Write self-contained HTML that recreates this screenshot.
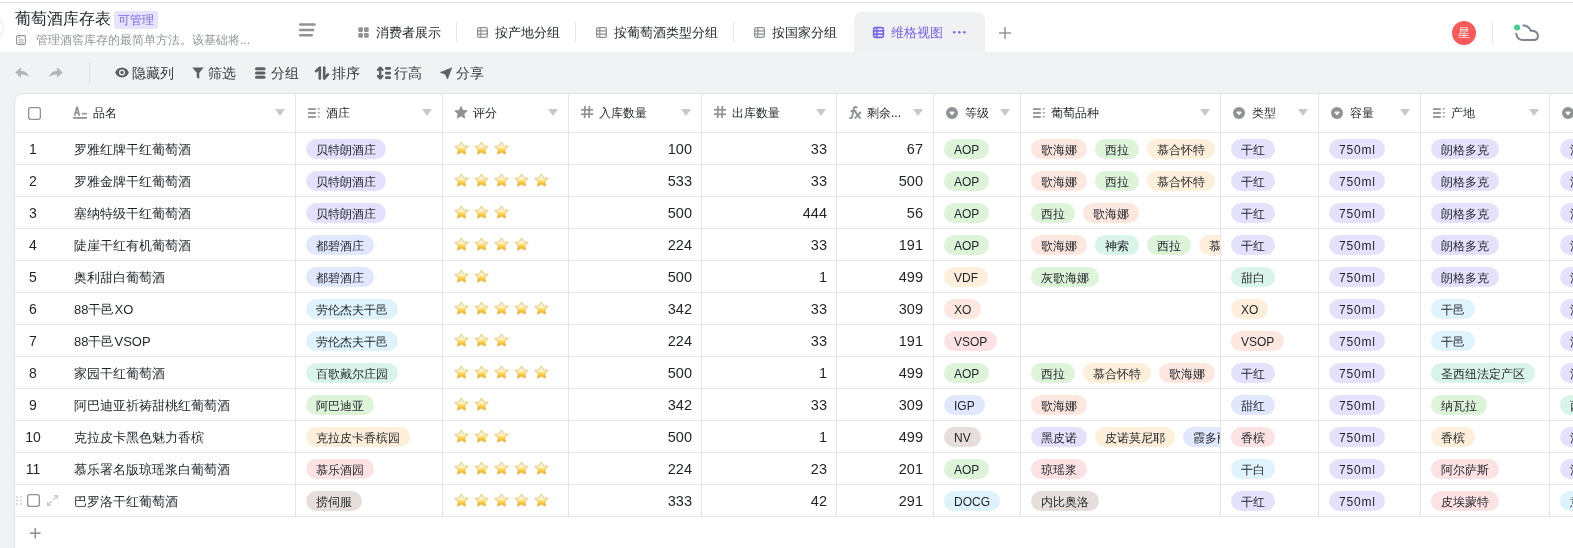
<!DOCTYPE html><html><head><meta charset="utf-8"><style>
*{box-sizing:border-box}
html,body{margin:0;padding:0}
body{width:1573px;height:548px;overflow:hidden;position:relative;background:#fff;font-family:"Liberation Sans",sans-serif;color:#1f2329}
.a{position:absolute}
svg{position:absolute;overflow:visible}
.nw{white-space:nowrap}
.pill{position:absolute;height:20px;border-radius:10px;font-size:12px;line-height:22px;padding:0 10px;white-space:nowrap;color:#1f2329}
.hd{position:absolute;top:105px;font-size:12px;line-height:17px;white-space:nowrap;color:#1f2329}
.tri{position:absolute;top:109px;width:0;height:0;border-left:5px solid transparent;border-right:5px solid transparent;border-top:7px solid #c5c8cc}
.cell{position:absolute;font-size:13px;line-height:16px;white-space:nowrap;color:#1f2329}
.tab{position:absolute;top:24px;font-size:13px;line-height:17px;white-space:nowrap;color:#1f2329}
.tb{position:absolute;top:64px;font-size:14px;line-height:18px;white-space:nowrap;color:#34383e}
</style></head><body><div id="root" style="position:absolute;left:0;top:0;width:1573px;height:548px;overflow:hidden;will-change:transform">
<div class="a" style="left:0;top:2px;width:1573px;height:1px;background:#e1e2e6"></div>
<div class="a" style="left:-20px;top:16px;width:24px;height:24px;border-radius:50%;border:1px solid #e6e7ea"></div>
<div class="a nw" style="left:15px;top:9px;font-size:16px;line-height:20px;color:#1f2329">葡萄酒库存表</div>
<div class="a nw" style="left:114px;top:11px;width:44px;height:18px;border-radius:3px;background:#e6e3fc;color:#7b6af0;font-size:12px;line-height:19px;text-align:center">可管理</div>
<svg style="left:16px;top:35px" width="10" height="10" viewBox="0 0 10 10"><rect x="0.6" y="0.6" width="8.8" height="8.8" rx="1.5" fill="none" stroke="#909296" stroke-width="1.1"/><rect x="2.2" y="2.4" width="2.6" height="0.7" fill="#909296"/><rect x="2.2" y="4" width="5.6" height="1.8" fill="#c9ccd1"/><rect x="2.2" y="6.7" width="5.6" height="0.8" fill="#909296"/></svg>
<div class="a nw" style="left:36px;top:32px;font-size:12px;line-height:16px;color:#8f959e">管理酒窖库存的最简单方法。该基础将...</div>
<svg style="left:299px;top:23px" width="17" height="15" viewBox="0 0 17 15"><g stroke="#909296" stroke-width="2.4" stroke-linecap="round"><line x1="1.2" y1="1.5" x2="15.6" y2="1.5"/><line x1="1.2" y1="7" x2="14.2" y2="7"/><line x1="1.2" y1="12.2" x2="12.8" y2="12.2"/></g></svg>
<svg style="left:358px;top:27px" width="11" height="11" viewBox="0 0 11 11"><g fill="#909296"><rect x="0.3" y="0.3" width="4.6" height="4.6" rx="0.8"/><rect x="6.1" y="0.3" width="4.6" height="4.6" rx="0.8"/><rect x="0.3" y="6.1" width="4.6" height="4.6" rx="0.8"/><rect x="6.1" y="6.1" width="4.6" height="4.6" rx="0.8"/></g></svg>
<div class="tab" style="left:376px">消费者展示</div>
<div class="a" style="left:456px;top:22px;width:1px;height:20px;background:#e4e5e7"></div>
<svg style="left:477px;top:27px" width="11" height="11" viewBox="0 0 11 11"><g fill="none" stroke="#909296" stroke-width="1.3"><rect x="0.65" y="0.65" width="9.7" height="9.7" rx="1.6"/><line x1="0.65" y1="3.9" x2="10.35" y2="3.9"/><line x1="0.65" y1="7.1" x2="10.35" y2="7.1"/><line x1="3.8" y1="0.65" x2="3.8" y2="10.35"/></g></svg>
<div class="tab" style="left:495px">按产地分组</div>
<div class="a" style="left:575px;top:22px;width:1px;height:20px;background:#e4e5e7"></div>
<svg style="left:596px;top:27px" width="11" height="11" viewBox="0 0 11 11"><g fill="none" stroke="#909296" stroke-width="1.3"><rect x="0.65" y="0.65" width="9.7" height="9.7" rx="1.6"/><line x1="0.65" y1="3.9" x2="10.35" y2="3.9"/><line x1="0.65" y1="7.1" x2="10.35" y2="7.1"/><line x1="3.8" y1="0.65" x2="3.8" y2="10.35"/></g></svg>
<div class="tab" style="left:614px">按葡萄酒类型分组</div>
<div class="a" style="left:733px;top:22px;width:1px;height:20px;background:#e4e5e7"></div>
<svg style="left:754px;top:27px" width="11" height="11" viewBox="0 0 11 11"><g fill="none" stroke="#909296" stroke-width="1.3"><rect x="0.65" y="0.65" width="9.7" height="9.7" rx="1.6"/><line x1="0.65" y1="3.9" x2="10.35" y2="3.9"/><line x1="0.65" y1="7.1" x2="10.35" y2="7.1"/><line x1="3.8" y1="0.65" x2="3.8" y2="10.35"/></g></svg>
<div class="tab" style="left:772px">按国家分组</div>
<div class="a" style="left:854px;top:12px;width:131px;height:41px;background:#f0f1f3;border-radius:8px 8px 0 0"></div>
<svg style="left:873px;top:27px" width="11" height="11" viewBox="0 0 11 11"><g fill="none" stroke="#7464ef" stroke-width="1.6"><rect x="0.65" y="0.65" width="9.7" height="9.7" rx="1.6"/><line x1="0.65" y1="3.9" x2="10.35" y2="3.9"/><line x1="0.65" y1="7.1" x2="10.35" y2="7.1"/><line x1="3.8" y1="0.65" x2="3.8" y2="10.35"/></g></svg>
<div class="tab" style="left:891px;color:#7464ef">维格视图</div>
<svg style="left:953px;top:31px" width="13" height="3" viewBox="0 0 13 3"><g fill="#7464ef"><circle cx="1.2" cy="1.2" r="1.2"/><circle cx="6.3" cy="1.2" r="1.2"/><circle cx="11.4" cy="1.2" r="1.2"/></g></svg>
<svg style="left:999px;top:27px" width="12" height="12" viewBox="0 0 12 12"><g stroke="#8a8f97" stroke-width="1.4"><line x1="0" y1="6" x2="12" y2="6"/><line x1="6" y1="0" x2="6" y2="12"/></g></svg>
<div class="a" style="left:1452px;top:21px;width:24px;height:24px;border-radius:50%;background:#f85a5a;color:#fff;font-size:12px;line-height:24px;text-align:center">星</div>
<div class="a" style="left:1492px;top:23px;width:1px;height:20px;background:#e4e5e7"></div>
<svg style="left:1514px;top:24px" width="28" height="18" viewBox="0 0 28 18"><path d="M9.4 1.5 C12.6 1.5 15.2 3.3 16.8 6.7 C20.6 6.2 24 8.6 24 11.9 C24 14.4 22.3 15.9 19.6 15.9 L9 15.9 C5.5 15.9 2.8 13.5 2.3 9.8" fill="none" stroke="#7f8290" stroke-width="2" stroke-linecap="round" stroke-linejoin="round"/><circle cx="3.1" cy="3.6" r="3" fill="#3fcf8e"/></svg>
<div class="a" style="left:0;top:52px;width:1573px;height:496px;background:#f1f2f4"></div>
<svg style="left:15px;top:67px" width="14" height="11" viewBox="0 0 13 10"><path d="M5.5 0.2 L0.3 5 L5.5 9.8 L5.5 6.8 C8.6 6.6 11 7.4 12.9 9.3 C12 5.5 9.2 3.6 5.5 3.4 Z" fill="#b1b4b8"/></svg>
<svg style="left:49px;top:67px" width="14" height="11" viewBox="0 0 13 10"><g transform="translate(13,0) scale(-1,1)"><path d="M5.5 0.2 L0.3 5 L5.5 9.8 L5.5 6.8 C8.6 6.6 11 7.4 12.9 9.3 C12 5.5 9.2 3.6 5.5 3.4 Z" fill="#b1b4b8"/></g></svg>
<div class="a" style="left:89px;top:63px;width:1px;height:20px;background:#dcdee1"></div>
<svg style="left:115px;top:67px" width="14" height="11" viewBox="0 0 14 11"><path d="M7 0.6 C3.6 0.6 1.2 2.8 0.2 5.5 C1.2 8.2 3.6 10.4 7 10.4 C10.4 10.4 12.8 8.2 13.8 5.5 C12.8 2.8 10.4 0.6 7 0.6 Z" fill="#5c5f64"/><circle cx="7" cy="5.5" r="3" fill="#f0f1f3"/><circle cx="7" cy="5.5" r="1.7" fill="#5c5f64"/></svg>
<div class="tb" style="left:132px">隐藏列</div>
<svg style="left:192px;top:67px" width="12" height="12" viewBox="0 0 12 12"><path d="M0.2 0.5 L11.8 0.5 L7.3 5.8 L7.3 11.2 C7.3 11.6 6.9 11.8 6.5 11.6 L5.2 10.8 C4.9 10.6 4.7 10.3 4.7 10 L4.7 5.8 Z" fill="#5c5f64"/></svg>
<div class="tb" style="left:208px">筛选</div>
<svg style="left:255px;top:67px" width="11" height="12" viewBox="0 0 11 12"><g fill="#5c5f64"><rect x="0" y="0.3" width="10.5" height="3" rx="1.5"/><rect x="0" y="4.5" width="10.5" height="3" rx="1.5"/><rect x="0" y="8.7" width="10.5" height="3" rx="1.5"/></g></svg>
<div class="tb" style="left:271px">分组</div>
<svg style="left:314px;top:66px" width="16" height="14" viewBox="0 0 16 14"><g fill="none" stroke="#5c5f64" stroke-width="2.6" stroke-linejoin="round" stroke-linecap="round"><path d="M5.8 12.6 L5.8 1.6 L2 5.2"/><path d="M10.2 1.6 L10.2 12.6 L14 8.4"/></g></svg>
<div class="tb" style="left:332px">排序</div>
<svg style="left:376px;top:66px" width="16" height="14" viewBox="0 0 16 14"><g fill="none" stroke="#5c5f64" stroke-width="2.3" stroke-linejoin="round" stroke-linecap="round"><path d="M4.2 1.8 L4.2 12.2"/><path d="M1.9 4 L4.2 1.6 L6.5 4"/><path d="M1.9 10 L4.2 12.4 L6.5 10"/></g><g fill="#5c5f64"><rect x="9" y="1.1" width="6" height="2.6" rx="1.2"/><rect x="9" y="5.8" width="6" height="2.6" rx="1.2"/><rect x="9" y="10.3" width="6" height="2.6" rx="1.2"/></g></svg>
<div class="tb" style="left:394px">行高</div>
<svg style="left:440px;top:67px" width="13" height="13" viewBox="0 0 13 13"><path d="M0.3 5.4 L11.8 0.8 L7.5 12 L5.3 7.2 Z" fill="#5c5f64" stroke="#5c5f64" stroke-width="0.6" stroke-linejoin="round"/></svg>
<div class="tb" style="left:456px">分享</div>
<div class="a" style="left:14px;top:93px;width:1600px;height:480px;background:#fff;border:1px solid #dfe1e5;border-radius:8px 0 0 0"></div>
<div class="a" style="left:15px;top:132px;width:1558px;height:1px;background:#e4e5e7"></div>
<div class="a" style="left:15px;top:164px;width:1558px;height:1px;background:#e4e5e7"></div>
<div class="a" style="left:15px;top:196px;width:1558px;height:1px;background:#e4e5e7"></div>
<div class="a" style="left:15px;top:228px;width:1558px;height:1px;background:#e4e5e7"></div>
<div class="a" style="left:15px;top:260px;width:1558px;height:1px;background:#e4e5e7"></div>
<div class="a" style="left:15px;top:292px;width:1558px;height:1px;background:#e4e5e7"></div>
<div class="a" style="left:15px;top:324px;width:1558px;height:1px;background:#e4e5e7"></div>
<div class="a" style="left:15px;top:356px;width:1558px;height:1px;background:#e4e5e7"></div>
<div class="a" style="left:15px;top:388px;width:1558px;height:1px;background:#e4e5e7"></div>
<div class="a" style="left:15px;top:420px;width:1558px;height:1px;background:#e4e5e7"></div>
<div class="a" style="left:15px;top:452px;width:1558px;height:1px;background:#e4e5e7"></div>
<div class="a" style="left:15px;top:484px;width:1558px;height:1px;background:#e4e5e7"></div>
<div class="a" style="left:15px;top:516px;width:1558px;height:1px;background:#e4e5e7"></div>
<div class="a" style="left:295px;top:94px;width:1px;height:422px;background:#e4e5e7"></div>
<div class="a" style="left:442px;top:94px;width:1px;height:422px;background:#e4e5e7"></div>
<div class="a" style="left:568px;top:94px;width:1px;height:422px;background:#e4e5e7"></div>
<div class="a" style="left:701px;top:94px;width:1px;height:422px;background:#e4e5e7"></div>
<div class="a" style="left:836px;top:94px;width:1px;height:422px;background:#e4e5e7"></div>
<div class="a" style="left:933px;top:94px;width:1px;height:422px;background:#e4e5e7"></div>
<div class="a" style="left:1020px;top:94px;width:1px;height:422px;background:#e4e5e7"></div>
<div class="a" style="left:1220px;top:94px;width:1px;height:422px;background:#e4e5e7"></div>
<div class="a" style="left:1318px;top:94px;width:1px;height:422px;background:#e4e5e7"></div>
<div class="a" style="left:1420px;top:94px;width:1px;height:422px;background:#e4e5e7"></div>
<div class="a" style="left:1549px;top:94px;width:1px;height:422px;background:#e4e5e7"></div>
<svg style="left:28px;top:107px" width="13" height="13" viewBox="0 0 13 13"><rect x="0.65" y="0.65" width="11.7" height="11.7" rx="2" fill="none" stroke="#909296" stroke-width="1.3"/></svg>
<svg style="left:73px;top:106px" width="14" height="13" viewBox="0 0 14 13"><path d="M0.8 9.8 L3.1 0.6 L4.9 0.6 L7.2 9.8 L5.4 9.8 L4 3.6 L2.6 9.8 Z" fill="#909296"/><rect x="2.3" y="6" width="3.4" height="1.5" fill="#909296"/><rect x="8.8" y="6.9" width="5" height="1.6" fill="#909296"/><rect x="0" y="11" width="14" height="1.8" fill="#909296"/></svg>
<div class="hd" style="left:93px">品名</div>
<div class="tri" style="left:275px"></div>
<svg style="left:308px;top:108px" width="13" height="10" viewBox="0 0 13 10"><g fill="#909296"><rect x="0" y="0.2" width="7.8" height="1.8"/><rect x="0" y="4.1" width="7.8" height="1.8"/><rect x="0" y="8.1" width="7.8" height="1.8"/><path d="M9.3 0.3 L12.3 0.3 L10.8 2.1 Z"/><path d="M9.3 4.2 L12.3 4.2 L10.8 6 Z"/><path d="M9.3 8.2 L12.3 8.2 L10.8 10 Z"/></g></svg>
<div class="hd" style="left:326px">酒庄</div>
<div class="tri" style="left:422px"></div>
<svg style="left:454px;top:106px" width="14" height="13" viewBox="0 0 24 23"><path d="M12 0.5 L15.3 7.6 L23.2 8.5 L17.3 13.8 L18.9 21.6 L12 17.7 L5.1 21.6 L6.7 13.8 L0.8 8.5 L8.7 7.6 Z" fill="#909296" stroke="#909296" stroke-width="1.2" stroke-linejoin="round"/></svg>
<div class="hd" style="left:473px">评分</div>
<div class="tri" style="left:548px"></div>
<svg style="left:581px;top:106px" width="12" height="12" viewBox="0 0 12 12"><g stroke="#909296" stroke-width="1.7"><line x1="0" y1="3.8" x2="12" y2="3.8"/><line x1="0" y1="8.2" x2="12" y2="8.2"/><line x1="4" y1="0" x2="3.6" y2="12"/><line x1="8.4" y1="0" x2="8" y2="12"/></g></svg>
<div class="hd" style="left:599px">入库数量</div>
<div class="tri" style="left:681px"></div>
<svg style="left:714px;top:106px" width="12" height="12" viewBox="0 0 12 12"><g stroke="#909296" stroke-width="1.7"><line x1="0" y1="3.8" x2="12" y2="3.8"/><line x1="0" y1="8.2" x2="12" y2="8.2"/><line x1="4" y1="0" x2="3.6" y2="12"/><line x1="8.4" y1="0" x2="8" y2="12"/></g></svg>
<div class="hd" style="left:732px">出库数量</div>
<div class="tri" style="left:816px"></div>
<svg style="left:849px;top:106px" width="13" height="13" viewBox="0 0 13 13"><g fill="none" stroke="#909296" stroke-width="1.9" stroke-linecap="round"><path d="M7.6 1.3 C6.2 0.6 5.1 1.2 4.8 2.6 L3.2 10.6 C2.9 11.9 2 12.3 1 11.9"/><path d="M2.4 5 L6.6 5"/><path d="M6.6 6.4 L11 12"/><path d="M11.2 6.4 L6.4 12"/></g></svg>
<div class="hd" style="left:867px">剩余...</div>
<div class="tri" style="left:913px"></div>
<svg style="left:946px;top:107px" width="12" height="12" viewBox="0 0 12 12"><circle cx="6" cy="6" r="6" fill="#909296"/><path d="M3.7 5 L8.3 5 L6 7.9 Z" fill="#fff" stroke="#fff" stroke-width="0.9" stroke-linejoin="round"/></svg>
<div class="hd" style="left:965px">等级</div>
<div class="tri" style="left:1000px"></div>
<svg style="left:1033px;top:108px" width="13" height="10" viewBox="0 0 13 10"><g fill="#909296"><rect x="0" y="0.2" width="7.8" height="1.8"/><rect x="0" y="4.1" width="7.8" height="1.8"/><rect x="0" y="8.1" width="7.8" height="1.8"/><path d="M9.3 0.3 L12.3 0.3 L10.8 2.1 Z"/><path d="M9.3 4.2 L12.3 4.2 L10.8 6 Z"/><path d="M9.3 8.2 L12.3 8.2 L10.8 10 Z"/></g></svg>
<div class="hd" style="left:1051px">葡萄品种</div>
<div class="tri" style="left:1200px"></div>
<svg style="left:1233px;top:107px" width="12" height="12" viewBox="0 0 12 12"><circle cx="6" cy="6" r="6" fill="#909296"/><path d="M3.7 5 L8.3 5 L6 7.9 Z" fill="#fff" stroke="#fff" stroke-width="0.9" stroke-linejoin="round"/></svg>
<div class="hd" style="left:1252px">类型</div>
<div class="tri" style="left:1298px"></div>
<svg style="left:1331px;top:107px" width="12" height="12" viewBox="0 0 12 12"><circle cx="6" cy="6" r="6" fill="#909296"/><path d="M3.7 5 L8.3 5 L6 7.9 Z" fill="#fff" stroke="#fff" stroke-width="0.9" stroke-linejoin="round"/></svg>
<div class="hd" style="left:1350px">容量</div>
<div class="tri" style="left:1400px"></div>
<svg style="left:1433px;top:108px" width="13" height="10" viewBox="0 0 13 10"><g fill="#909296"><rect x="0" y="0.2" width="7.8" height="1.8"/><rect x="0" y="4.1" width="7.8" height="1.8"/><rect x="0" y="8.1" width="7.8" height="1.8"/><path d="M9.3 0.3 L12.3 0.3 L10.8 2.1 Z"/><path d="M9.3 4.2 L12.3 4.2 L10.8 6 Z"/><path d="M9.3 8.2 L12.3 8.2 L10.8 10 Z"/></g></svg>
<div class="hd" style="left:1451px">产地</div>
<div class="tri" style="left:1529px"></div>
<svg style="left:1562px;top:107px" width="12" height="12" viewBox="0 0 12 12"><circle cx="6" cy="6" r="6" fill="#909296"/><path d="M3.7 5 L8.3 5 L6 7.9 Z" fill="#fff" stroke="#fff" stroke-width="0.9" stroke-linejoin="round"/></svg>
<svg style="left:0;top:0" width="0" height="0"><defs><linearGradient id="gs" x1="0" y1="0" x2="0" y2="1"><stop offset="0" stop-color="#ffffff"/><stop offset="0.42" stop-color="#fff4d2"/><stop offset="0.62" stop-color="#fdd957"/><stop offset="1" stop-color="#f0a712"/></linearGradient></defs></svg>
<div class="cell" style="left:25px;top:141px;width:16px;text-align:center;font-size:14px">1</div>
<div class="cell" style="left:74px;top:142px">罗雅红牌干红葡萄酒</div>
<div class="pill" style="left:306px;top:139px;background:#e4e1fc">贝特朗酒庄</div>
<svg style="left:454px;top:141px" width="15" height="14" viewBox="0 0 24 23"><path d="M12.0 1.3 L15.4 8.0 L22.7 9.1 L17.4 14.4 L18.6 21.7 L12.0 18.3 L5.4 21.7 L6.6 14.4 L1.3 9.1 L8.6 8.0 Z" fill="url(#gs)" stroke="#eab643" stroke-width="1.3" stroke-linejoin="round"/></svg>
<svg style="left:474px;top:141px" width="15" height="14" viewBox="0 0 24 23"><path d="M12.0 1.3 L15.4 8.0 L22.7 9.1 L17.4 14.4 L18.6 21.7 L12.0 18.3 L5.4 21.7 L6.6 14.4 L1.3 9.1 L8.6 8.0 Z" fill="url(#gs)" stroke="#eab643" stroke-width="1.3" stroke-linejoin="round"/></svg>
<svg style="left:494px;top:141px" width="15" height="14" viewBox="0 0 24 23"><path d="M12.0 1.3 L15.4 8.0 L22.7 9.1 L17.4 14.4 L18.6 21.7 L12.0 18.3 L5.4 21.7 L6.6 14.4 L1.3 9.1 L8.6 8.0 Z" fill="url(#gs)" stroke="#eab643" stroke-width="1.3" stroke-linejoin="round"/></svg>
<div class="cell" style="left:568px;top:141px;width:124px;font-size:14.5px;text-align:right">100</div>
<div class="cell" style="left:701px;top:141px;width:126px;font-size:14.5px;text-align:right">33</div>
<div class="cell" style="left:836px;top:141px;width:87px;font-size:14.5px;text-align:right">67</div>
<div class="pill" style="left:944px;top:139px;background:#ddf4d9">AOP</div>
<div class="a nw" style="left:1021px;top:133px;width:199px;height:31px;overflow:hidden;padding-left:10px"><div class="pill" style="position:relative;display:inline-block;left:auto;top:6px;margin-right:8px;background:#fde7df">歌海娜</div><div class="pill" style="position:relative;display:inline-block;left:auto;top:6px;margin-right:8px;background:#ddf4d9">西拉</div><div class="pill" style="position:relative;display:inline-block;left:auto;top:6px;margin-right:8px;background:#fdefd9">慕合怀特</div></div>
<div class="pill" style="left:1231px;top:139px;background:#e4e1fc">干红</div>
<div class="pill" style="left:1329px;top:139px;background:#e4e1fc;letter-spacing:0.8px;padding:0 9px 0 10px">750ml</div>
<div class="pill" style="left:1431px;top:139px;background:#e4e1fc">朗格多克</div>
<div class="pill" style="left:1560px;top:139px;background:#e4e1fc">法国</div>
<div class="cell" style="left:25px;top:173px;width:16px;text-align:center;font-size:14px">2</div>
<div class="cell" style="left:74px;top:174px">罗雅金牌干红葡萄酒</div>
<div class="pill" style="left:306px;top:171px;background:#e4e1fc">贝特朗酒庄</div>
<svg style="left:454px;top:173px" width="15" height="14" viewBox="0 0 24 23"><path d="M12.0 1.3 L15.4 8.0 L22.7 9.1 L17.4 14.4 L18.6 21.7 L12.0 18.3 L5.4 21.7 L6.6 14.4 L1.3 9.1 L8.6 8.0 Z" fill="url(#gs)" stroke="#eab643" stroke-width="1.3" stroke-linejoin="round"/></svg>
<svg style="left:474px;top:173px" width="15" height="14" viewBox="0 0 24 23"><path d="M12.0 1.3 L15.4 8.0 L22.7 9.1 L17.4 14.4 L18.6 21.7 L12.0 18.3 L5.4 21.7 L6.6 14.4 L1.3 9.1 L8.6 8.0 Z" fill="url(#gs)" stroke="#eab643" stroke-width="1.3" stroke-linejoin="round"/></svg>
<svg style="left:494px;top:173px" width="15" height="14" viewBox="0 0 24 23"><path d="M12.0 1.3 L15.4 8.0 L22.7 9.1 L17.4 14.4 L18.6 21.7 L12.0 18.3 L5.4 21.7 L6.6 14.4 L1.3 9.1 L8.6 8.0 Z" fill="url(#gs)" stroke="#eab643" stroke-width="1.3" stroke-linejoin="round"/></svg>
<svg style="left:514px;top:173px" width="15" height="14" viewBox="0 0 24 23"><path d="M12.0 1.3 L15.4 8.0 L22.7 9.1 L17.4 14.4 L18.6 21.7 L12.0 18.3 L5.4 21.7 L6.6 14.4 L1.3 9.1 L8.6 8.0 Z" fill="url(#gs)" stroke="#eab643" stroke-width="1.3" stroke-linejoin="round"/></svg>
<svg style="left:534px;top:173px" width="15" height="14" viewBox="0 0 24 23"><path d="M12.0 1.3 L15.4 8.0 L22.7 9.1 L17.4 14.4 L18.6 21.7 L12.0 18.3 L5.4 21.7 L6.6 14.4 L1.3 9.1 L8.6 8.0 Z" fill="url(#gs)" stroke="#eab643" stroke-width="1.3" stroke-linejoin="round"/></svg>
<div class="cell" style="left:568px;top:173px;width:124px;font-size:14.5px;text-align:right">533</div>
<div class="cell" style="left:701px;top:173px;width:126px;font-size:14.5px;text-align:right">33</div>
<div class="cell" style="left:836px;top:173px;width:87px;font-size:14.5px;text-align:right">500</div>
<div class="pill" style="left:944px;top:171px;background:#ddf4d9">AOP</div>
<div class="a nw" style="left:1021px;top:165px;width:199px;height:31px;overflow:hidden;padding-left:10px"><div class="pill" style="position:relative;display:inline-block;left:auto;top:6px;margin-right:8px;background:#fde7df">歌海娜</div><div class="pill" style="position:relative;display:inline-block;left:auto;top:6px;margin-right:8px;background:#ddf4d9">西拉</div><div class="pill" style="position:relative;display:inline-block;left:auto;top:6px;margin-right:8px;background:#fdefd9">慕合怀特</div></div>
<div class="pill" style="left:1231px;top:171px;background:#e4e1fc">干红</div>
<div class="pill" style="left:1329px;top:171px;background:#e4e1fc;letter-spacing:0.8px;padding:0 9px 0 10px">750ml</div>
<div class="pill" style="left:1431px;top:171px;background:#e4e1fc">朗格多克</div>
<div class="pill" style="left:1560px;top:171px;background:#e4e1fc">法国</div>
<div class="cell" style="left:25px;top:205px;width:16px;text-align:center;font-size:14px">3</div>
<div class="cell" style="left:74px;top:206px">塞纳特级干红葡萄酒</div>
<div class="pill" style="left:306px;top:203px;background:#e4e1fc">贝特朗酒庄</div>
<svg style="left:454px;top:205px" width="15" height="14" viewBox="0 0 24 23"><path d="M12.0 1.3 L15.4 8.0 L22.7 9.1 L17.4 14.4 L18.6 21.7 L12.0 18.3 L5.4 21.7 L6.6 14.4 L1.3 9.1 L8.6 8.0 Z" fill="url(#gs)" stroke="#eab643" stroke-width="1.3" stroke-linejoin="round"/></svg>
<svg style="left:474px;top:205px" width="15" height="14" viewBox="0 0 24 23"><path d="M12.0 1.3 L15.4 8.0 L22.7 9.1 L17.4 14.4 L18.6 21.7 L12.0 18.3 L5.4 21.7 L6.6 14.4 L1.3 9.1 L8.6 8.0 Z" fill="url(#gs)" stroke="#eab643" stroke-width="1.3" stroke-linejoin="round"/></svg>
<svg style="left:494px;top:205px" width="15" height="14" viewBox="0 0 24 23"><path d="M12.0 1.3 L15.4 8.0 L22.7 9.1 L17.4 14.4 L18.6 21.7 L12.0 18.3 L5.4 21.7 L6.6 14.4 L1.3 9.1 L8.6 8.0 Z" fill="url(#gs)" stroke="#eab643" stroke-width="1.3" stroke-linejoin="round"/></svg>
<div class="cell" style="left:568px;top:205px;width:124px;font-size:14.5px;text-align:right">500</div>
<div class="cell" style="left:701px;top:205px;width:126px;font-size:14.5px;text-align:right">444</div>
<div class="cell" style="left:836px;top:205px;width:87px;font-size:14.5px;text-align:right">56</div>
<div class="pill" style="left:944px;top:203px;background:#ddf4d9">AOP</div>
<div class="a nw" style="left:1021px;top:197px;width:199px;height:31px;overflow:hidden;padding-left:10px"><div class="pill" style="position:relative;display:inline-block;left:auto;top:6px;margin-right:8px;background:#ddf4d9">西拉</div><div class="pill" style="position:relative;display:inline-block;left:auto;top:6px;margin-right:8px;background:#fde7df">歌海娜</div></div>
<div class="pill" style="left:1231px;top:203px;background:#e4e1fc">干红</div>
<div class="pill" style="left:1329px;top:203px;background:#e4e1fc;letter-spacing:0.8px;padding:0 9px 0 10px">750ml</div>
<div class="pill" style="left:1431px;top:203px;background:#e4e1fc">朗格多克</div>
<div class="pill" style="left:1560px;top:203px;background:#e4e1fc">法国</div>
<div class="cell" style="left:25px;top:237px;width:16px;text-align:center;font-size:14px">4</div>
<div class="cell" style="left:74px;top:238px">陡崖干红有机葡萄酒</div>
<div class="pill" style="left:306px;top:235px;background:#e1e8fe">都碧酒庄</div>
<svg style="left:454px;top:237px" width="15" height="14" viewBox="0 0 24 23"><path d="M12.0 1.3 L15.4 8.0 L22.7 9.1 L17.4 14.4 L18.6 21.7 L12.0 18.3 L5.4 21.7 L6.6 14.4 L1.3 9.1 L8.6 8.0 Z" fill="url(#gs)" stroke="#eab643" stroke-width="1.3" stroke-linejoin="round"/></svg>
<svg style="left:474px;top:237px" width="15" height="14" viewBox="0 0 24 23"><path d="M12.0 1.3 L15.4 8.0 L22.7 9.1 L17.4 14.4 L18.6 21.7 L12.0 18.3 L5.4 21.7 L6.6 14.4 L1.3 9.1 L8.6 8.0 Z" fill="url(#gs)" stroke="#eab643" stroke-width="1.3" stroke-linejoin="round"/></svg>
<svg style="left:494px;top:237px" width="15" height="14" viewBox="0 0 24 23"><path d="M12.0 1.3 L15.4 8.0 L22.7 9.1 L17.4 14.4 L18.6 21.7 L12.0 18.3 L5.4 21.7 L6.6 14.4 L1.3 9.1 L8.6 8.0 Z" fill="url(#gs)" stroke="#eab643" stroke-width="1.3" stroke-linejoin="round"/></svg>
<svg style="left:514px;top:237px" width="15" height="14" viewBox="0 0 24 23"><path d="M12.0 1.3 L15.4 8.0 L22.7 9.1 L17.4 14.4 L18.6 21.7 L12.0 18.3 L5.4 21.7 L6.6 14.4 L1.3 9.1 L8.6 8.0 Z" fill="url(#gs)" stroke="#eab643" stroke-width="1.3" stroke-linejoin="round"/></svg>
<div class="cell" style="left:568px;top:237px;width:124px;font-size:14.5px;text-align:right">224</div>
<div class="cell" style="left:701px;top:237px;width:126px;font-size:14.5px;text-align:right">33</div>
<div class="cell" style="left:836px;top:237px;width:87px;font-size:14.5px;text-align:right">191</div>
<div class="pill" style="left:944px;top:235px;background:#ddf4d9">AOP</div>
<div class="a nw" style="left:1021px;top:229px;width:199px;height:31px;overflow:hidden;padding-left:10px"><div class="pill" style="position:relative;display:inline-block;left:auto;top:6px;margin-right:8px;background:#fde7df">歌海娜</div><div class="pill" style="position:relative;display:inline-block;left:auto;top:6px;margin-right:8px;background:#d9f4e8">神索</div><div class="pill" style="position:relative;display:inline-block;left:auto;top:6px;margin-right:8px;background:#ddf4d9">西拉</div><div class="pill" style="position:relative;display:inline-block;left:auto;top:6px;margin-right:8px;background:#fdefd9">慕合怀特</div></div>
<div class="pill" style="left:1231px;top:235px;background:#e4e1fc">干红</div>
<div class="pill" style="left:1329px;top:235px;background:#e4e1fc;letter-spacing:0.8px;padding:0 9px 0 10px">750ml</div>
<div class="pill" style="left:1431px;top:235px;background:#e4e1fc">朗格多克</div>
<div class="pill" style="left:1560px;top:235px;background:#e4e1fc">法国</div>
<div class="cell" style="left:25px;top:269px;width:16px;text-align:center;font-size:14px">5</div>
<div class="cell" style="left:74px;top:270px">奥利甜白葡萄酒</div>
<div class="pill" style="left:306px;top:267px;background:#e1e8fe">都碧酒庄</div>
<svg style="left:454px;top:269px" width="15" height="14" viewBox="0 0 24 23"><path d="M12.0 1.3 L15.4 8.0 L22.7 9.1 L17.4 14.4 L18.6 21.7 L12.0 18.3 L5.4 21.7 L6.6 14.4 L1.3 9.1 L8.6 8.0 Z" fill="url(#gs)" stroke="#eab643" stroke-width="1.3" stroke-linejoin="round"/></svg>
<svg style="left:474px;top:269px" width="15" height="14" viewBox="0 0 24 23"><path d="M12.0 1.3 L15.4 8.0 L22.7 9.1 L17.4 14.4 L18.6 21.7 L12.0 18.3 L5.4 21.7 L6.6 14.4 L1.3 9.1 L8.6 8.0 Z" fill="url(#gs)" stroke="#eab643" stroke-width="1.3" stroke-linejoin="round"/></svg>
<div class="cell" style="left:568px;top:269px;width:124px;font-size:14.5px;text-align:right">500</div>
<div class="cell" style="left:701px;top:269px;width:126px;font-size:14.5px;text-align:right">1</div>
<div class="cell" style="left:836px;top:269px;width:87px;font-size:14.5px;text-align:right">499</div>
<div class="pill" style="left:944px;top:267px;background:#fdefd9">VDF</div>
<div class="a nw" style="left:1021px;top:261px;width:199px;height:31px;overflow:hidden;padding-left:10px"><div class="pill" style="position:relative;display:inline-block;left:auto;top:6px;margin-right:8px;background:#ddf4d9">灰歌海娜</div></div>
<div class="pill" style="left:1231px;top:267px;background:#d9f4e8">甜白</div>
<div class="pill" style="left:1329px;top:267px;background:#e4e1fc;letter-spacing:0.8px;padding:0 9px 0 10px">750ml</div>
<div class="pill" style="left:1431px;top:267px;background:#e4e1fc">朗格多克</div>
<div class="pill" style="left:1560px;top:267px;background:#e4e1fc">法国</div>
<div class="cell" style="left:25px;top:301px;width:16px;text-align:center;font-size:14px">6</div>
<div class="cell" style="left:74px;top:302px">88干邑XO</div>
<div class="pill" style="left:306px;top:299px;background:#def3fc">劳伦杰夫干邑</div>
<svg style="left:454px;top:301px" width="15" height="14" viewBox="0 0 24 23"><path d="M12.0 1.3 L15.4 8.0 L22.7 9.1 L17.4 14.4 L18.6 21.7 L12.0 18.3 L5.4 21.7 L6.6 14.4 L1.3 9.1 L8.6 8.0 Z" fill="url(#gs)" stroke="#eab643" stroke-width="1.3" stroke-linejoin="round"/></svg>
<svg style="left:474px;top:301px" width="15" height="14" viewBox="0 0 24 23"><path d="M12.0 1.3 L15.4 8.0 L22.7 9.1 L17.4 14.4 L18.6 21.7 L12.0 18.3 L5.4 21.7 L6.6 14.4 L1.3 9.1 L8.6 8.0 Z" fill="url(#gs)" stroke="#eab643" stroke-width="1.3" stroke-linejoin="round"/></svg>
<svg style="left:494px;top:301px" width="15" height="14" viewBox="0 0 24 23"><path d="M12.0 1.3 L15.4 8.0 L22.7 9.1 L17.4 14.4 L18.6 21.7 L12.0 18.3 L5.4 21.7 L6.6 14.4 L1.3 9.1 L8.6 8.0 Z" fill="url(#gs)" stroke="#eab643" stroke-width="1.3" stroke-linejoin="round"/></svg>
<svg style="left:514px;top:301px" width="15" height="14" viewBox="0 0 24 23"><path d="M12.0 1.3 L15.4 8.0 L22.7 9.1 L17.4 14.4 L18.6 21.7 L12.0 18.3 L5.4 21.7 L6.6 14.4 L1.3 9.1 L8.6 8.0 Z" fill="url(#gs)" stroke="#eab643" stroke-width="1.3" stroke-linejoin="round"/></svg>
<svg style="left:534px;top:301px" width="15" height="14" viewBox="0 0 24 23"><path d="M12.0 1.3 L15.4 8.0 L22.7 9.1 L17.4 14.4 L18.6 21.7 L12.0 18.3 L5.4 21.7 L6.6 14.4 L1.3 9.1 L8.6 8.0 Z" fill="url(#gs)" stroke="#eab643" stroke-width="1.3" stroke-linejoin="round"/></svg>
<div class="cell" style="left:568px;top:301px;width:124px;font-size:14.5px;text-align:right">342</div>
<div class="cell" style="left:701px;top:301px;width:126px;font-size:14.5px;text-align:right">33</div>
<div class="cell" style="left:836px;top:301px;width:87px;font-size:14.5px;text-align:right">309</div>
<div class="pill" style="left:944px;top:299px;background:#fde7df">XO</div>
<div class="a nw" style="left:1021px;top:293px;width:199px;height:31px;overflow:hidden;padding-left:10px"></div>
<div class="pill" style="left:1231px;top:299px;background:#fdefd9">XO</div>
<div class="pill" style="left:1329px;top:299px;background:#e4e1fc;letter-spacing:0.8px;padding:0 9px 0 10px">750ml</div>
<div class="pill" style="left:1431px;top:299px;background:#def3fc">干邑</div>
<div class="pill" style="left:1560px;top:299px;background:#e4e1fc">法国</div>
<div class="cell" style="left:25px;top:333px;width:16px;text-align:center;font-size:14px">7</div>
<div class="cell" style="left:74px;top:334px">88干邑VSOP</div>
<div class="pill" style="left:306px;top:331px;background:#def3fc">劳伦杰夫干邑</div>
<svg style="left:454px;top:333px" width="15" height="14" viewBox="0 0 24 23"><path d="M12.0 1.3 L15.4 8.0 L22.7 9.1 L17.4 14.4 L18.6 21.7 L12.0 18.3 L5.4 21.7 L6.6 14.4 L1.3 9.1 L8.6 8.0 Z" fill="url(#gs)" stroke="#eab643" stroke-width="1.3" stroke-linejoin="round"/></svg>
<svg style="left:474px;top:333px" width="15" height="14" viewBox="0 0 24 23"><path d="M12.0 1.3 L15.4 8.0 L22.7 9.1 L17.4 14.4 L18.6 21.7 L12.0 18.3 L5.4 21.7 L6.6 14.4 L1.3 9.1 L8.6 8.0 Z" fill="url(#gs)" stroke="#eab643" stroke-width="1.3" stroke-linejoin="round"/></svg>
<svg style="left:494px;top:333px" width="15" height="14" viewBox="0 0 24 23"><path d="M12.0 1.3 L15.4 8.0 L22.7 9.1 L17.4 14.4 L18.6 21.7 L12.0 18.3 L5.4 21.7 L6.6 14.4 L1.3 9.1 L8.6 8.0 Z" fill="url(#gs)" stroke="#eab643" stroke-width="1.3" stroke-linejoin="round"/></svg>
<div class="cell" style="left:568px;top:333px;width:124px;font-size:14.5px;text-align:right">224</div>
<div class="cell" style="left:701px;top:333px;width:126px;font-size:14.5px;text-align:right">33</div>
<div class="cell" style="left:836px;top:333px;width:87px;font-size:14.5px;text-align:right">191</div>
<div class="pill" style="left:944px;top:331px;background:#fde2e4">VSOP</div>
<div class="a nw" style="left:1021px;top:325px;width:199px;height:31px;overflow:hidden;padding-left:10px"></div>
<div class="pill" style="left:1231px;top:331px;background:#fde7df">VSOP</div>
<div class="pill" style="left:1329px;top:331px;background:#e4e1fc;letter-spacing:0.8px;padding:0 9px 0 10px">750ml</div>
<div class="pill" style="left:1431px;top:331px;background:#def3fc">干邑</div>
<div class="pill" style="left:1560px;top:331px;background:#e4e1fc">法国</div>
<div class="cell" style="left:25px;top:365px;width:16px;text-align:center;font-size:14px">8</div>
<div class="cell" style="left:74px;top:366px">家园干红葡萄酒</div>
<div class="pill" style="left:306px;top:363px;background:#d9f4e8">百歌戴尔庄园</div>
<svg style="left:454px;top:365px" width="15" height="14" viewBox="0 0 24 23"><path d="M12.0 1.3 L15.4 8.0 L22.7 9.1 L17.4 14.4 L18.6 21.7 L12.0 18.3 L5.4 21.7 L6.6 14.4 L1.3 9.1 L8.6 8.0 Z" fill="url(#gs)" stroke="#eab643" stroke-width="1.3" stroke-linejoin="round"/></svg>
<svg style="left:474px;top:365px" width="15" height="14" viewBox="0 0 24 23"><path d="M12.0 1.3 L15.4 8.0 L22.7 9.1 L17.4 14.4 L18.6 21.7 L12.0 18.3 L5.4 21.7 L6.6 14.4 L1.3 9.1 L8.6 8.0 Z" fill="url(#gs)" stroke="#eab643" stroke-width="1.3" stroke-linejoin="round"/></svg>
<svg style="left:494px;top:365px" width="15" height="14" viewBox="0 0 24 23"><path d="M12.0 1.3 L15.4 8.0 L22.7 9.1 L17.4 14.4 L18.6 21.7 L12.0 18.3 L5.4 21.7 L6.6 14.4 L1.3 9.1 L8.6 8.0 Z" fill="url(#gs)" stroke="#eab643" stroke-width="1.3" stroke-linejoin="round"/></svg>
<svg style="left:514px;top:365px" width="15" height="14" viewBox="0 0 24 23"><path d="M12.0 1.3 L15.4 8.0 L22.7 9.1 L17.4 14.4 L18.6 21.7 L12.0 18.3 L5.4 21.7 L6.6 14.4 L1.3 9.1 L8.6 8.0 Z" fill="url(#gs)" stroke="#eab643" stroke-width="1.3" stroke-linejoin="round"/></svg>
<svg style="left:534px;top:365px" width="15" height="14" viewBox="0 0 24 23"><path d="M12.0 1.3 L15.4 8.0 L22.7 9.1 L17.4 14.4 L18.6 21.7 L12.0 18.3 L5.4 21.7 L6.6 14.4 L1.3 9.1 L8.6 8.0 Z" fill="url(#gs)" stroke="#eab643" stroke-width="1.3" stroke-linejoin="round"/></svg>
<div class="cell" style="left:568px;top:365px;width:124px;font-size:14.5px;text-align:right">500</div>
<div class="cell" style="left:701px;top:365px;width:126px;font-size:14.5px;text-align:right">1</div>
<div class="cell" style="left:836px;top:365px;width:87px;font-size:14.5px;text-align:right">499</div>
<div class="pill" style="left:944px;top:363px;background:#ddf4d9">AOP</div>
<div class="a nw" style="left:1021px;top:357px;width:199px;height:31px;overflow:hidden;padding-left:10px"><div class="pill" style="position:relative;display:inline-block;left:auto;top:6px;margin-right:8px;background:#ddf4d9">西拉</div><div class="pill" style="position:relative;display:inline-block;left:auto;top:6px;margin-right:8px;background:#fdefd9">慕合怀特</div><div class="pill" style="position:relative;display:inline-block;left:auto;top:6px;margin-right:8px;background:#fde7df">歌海娜</div></div>
<div class="pill" style="left:1231px;top:363px;background:#e4e1fc">干红</div>
<div class="pill" style="left:1329px;top:363px;background:#e4e1fc;letter-spacing:0.8px;padding:0 9px 0 10px">750ml</div>
<div class="pill" style="left:1431px;top:363px;background:#d9f4e8">圣西纽法定产区</div>
<div class="pill" style="left:1560px;top:363px;background:#e4e1fc">法国</div>
<div class="cell" style="left:25px;top:397px;width:16px;text-align:center;font-size:14px">9</div>
<div class="cell" style="left:74px;top:398px">阿巴迪亚祈祷甜桃红葡萄酒</div>
<div class="pill" style="left:306px;top:395px;background:#ddf4d9">阿巴迪亚</div>
<svg style="left:454px;top:397px" width="15" height="14" viewBox="0 0 24 23"><path d="M12.0 1.3 L15.4 8.0 L22.7 9.1 L17.4 14.4 L18.6 21.7 L12.0 18.3 L5.4 21.7 L6.6 14.4 L1.3 9.1 L8.6 8.0 Z" fill="url(#gs)" stroke="#eab643" stroke-width="1.3" stroke-linejoin="round"/></svg>
<svg style="left:474px;top:397px" width="15" height="14" viewBox="0 0 24 23"><path d="M12.0 1.3 L15.4 8.0 L22.7 9.1 L17.4 14.4 L18.6 21.7 L12.0 18.3 L5.4 21.7 L6.6 14.4 L1.3 9.1 L8.6 8.0 Z" fill="url(#gs)" stroke="#eab643" stroke-width="1.3" stroke-linejoin="round"/></svg>
<div class="cell" style="left:568px;top:397px;width:124px;font-size:14.5px;text-align:right">342</div>
<div class="cell" style="left:701px;top:397px;width:126px;font-size:14.5px;text-align:right">33</div>
<div class="cell" style="left:836px;top:397px;width:87px;font-size:14.5px;text-align:right">309</div>
<div class="pill" style="left:944px;top:395px;background:#e1e8fe">IGP</div>
<div class="a nw" style="left:1021px;top:389px;width:199px;height:31px;overflow:hidden;padding-left:10px"><div class="pill" style="position:relative;display:inline-block;left:auto;top:6px;margin-right:8px;background:#fde7df">歌海娜</div></div>
<div class="pill" style="left:1231px;top:395px;background:#e1e8fe">甜红</div>
<div class="pill" style="left:1329px;top:395px;background:#e4e1fc;letter-spacing:0.8px;padding:0 9px 0 10px">750ml</div>
<div class="pill" style="left:1431px;top:395px;background:#ddf4d9">纳瓦拉</div>
<div class="pill" style="left:1560px;top:395px;background:#d9f4e8">西班牙</div>
<div class="cell" style="left:25px;top:429px;width:16px;text-align:center;font-size:14px">10</div>
<div class="cell" style="left:74px;top:430px">克拉皮卡黑色魅力香槟</div>
<div class="pill" style="left:306px;top:427px;background:#fdefd9">克拉皮卡香槟园</div>
<svg style="left:454px;top:429px" width="15" height="14" viewBox="0 0 24 23"><path d="M12.0 1.3 L15.4 8.0 L22.7 9.1 L17.4 14.4 L18.6 21.7 L12.0 18.3 L5.4 21.7 L6.6 14.4 L1.3 9.1 L8.6 8.0 Z" fill="url(#gs)" stroke="#eab643" stroke-width="1.3" stroke-linejoin="round"/></svg>
<svg style="left:474px;top:429px" width="15" height="14" viewBox="0 0 24 23"><path d="M12.0 1.3 L15.4 8.0 L22.7 9.1 L17.4 14.4 L18.6 21.7 L12.0 18.3 L5.4 21.7 L6.6 14.4 L1.3 9.1 L8.6 8.0 Z" fill="url(#gs)" stroke="#eab643" stroke-width="1.3" stroke-linejoin="round"/></svg>
<svg style="left:494px;top:429px" width="15" height="14" viewBox="0 0 24 23"><path d="M12.0 1.3 L15.4 8.0 L22.7 9.1 L17.4 14.4 L18.6 21.7 L12.0 18.3 L5.4 21.7 L6.6 14.4 L1.3 9.1 L8.6 8.0 Z" fill="url(#gs)" stroke="#eab643" stroke-width="1.3" stroke-linejoin="round"/></svg>
<div class="cell" style="left:568px;top:429px;width:124px;font-size:14.5px;text-align:right">500</div>
<div class="cell" style="left:701px;top:429px;width:126px;font-size:14.5px;text-align:right">1</div>
<div class="cell" style="left:836px;top:429px;width:87px;font-size:14.5px;text-align:right">499</div>
<div class="pill" style="left:944px;top:427px;background:#e6dedb">NV</div>
<div class="a nw" style="left:1021px;top:421px;width:199px;height:31px;overflow:hidden;padding-left:10px"><div class="pill" style="position:relative;display:inline-block;left:auto;top:6px;margin-right:8px;background:#e4e1fc">黑皮诺</div><div class="pill" style="position:relative;display:inline-block;left:auto;top:6px;margin-right:8px;background:#fdefd9">皮诺莫尼耶</div><div class="pill" style="position:relative;display:inline-block;left:auto;top:6px;margin-right:8px;background:#e1e8fe">霞多丽</div></div>
<div class="pill" style="left:1231px;top:427px;background:#fde2e4">香槟</div>
<div class="pill" style="left:1329px;top:427px;background:#e4e1fc;letter-spacing:0.8px;padding:0 9px 0 10px">750ml</div>
<div class="pill" style="left:1431px;top:427px;background:#fdefd9">香槟</div>
<div class="pill" style="left:1560px;top:427px;background:#e4e1fc">法国</div>
<div class="cell" style="left:25px;top:461px;width:16px;text-align:center;font-size:14px">11</div>
<div class="cell" style="left:74px;top:462px">慕乐署名版琼瑶浆白葡萄酒</div>
<div class="pill" style="left:306px;top:459px;background:#fde2e4">慕乐酒园</div>
<svg style="left:454px;top:461px" width="15" height="14" viewBox="0 0 24 23"><path d="M12.0 1.3 L15.4 8.0 L22.7 9.1 L17.4 14.4 L18.6 21.7 L12.0 18.3 L5.4 21.7 L6.6 14.4 L1.3 9.1 L8.6 8.0 Z" fill="url(#gs)" stroke="#eab643" stroke-width="1.3" stroke-linejoin="round"/></svg>
<svg style="left:474px;top:461px" width="15" height="14" viewBox="0 0 24 23"><path d="M12.0 1.3 L15.4 8.0 L22.7 9.1 L17.4 14.4 L18.6 21.7 L12.0 18.3 L5.4 21.7 L6.6 14.4 L1.3 9.1 L8.6 8.0 Z" fill="url(#gs)" stroke="#eab643" stroke-width="1.3" stroke-linejoin="round"/></svg>
<svg style="left:494px;top:461px" width="15" height="14" viewBox="0 0 24 23"><path d="M12.0 1.3 L15.4 8.0 L22.7 9.1 L17.4 14.4 L18.6 21.7 L12.0 18.3 L5.4 21.7 L6.6 14.4 L1.3 9.1 L8.6 8.0 Z" fill="url(#gs)" stroke="#eab643" stroke-width="1.3" stroke-linejoin="round"/></svg>
<svg style="left:514px;top:461px" width="15" height="14" viewBox="0 0 24 23"><path d="M12.0 1.3 L15.4 8.0 L22.7 9.1 L17.4 14.4 L18.6 21.7 L12.0 18.3 L5.4 21.7 L6.6 14.4 L1.3 9.1 L8.6 8.0 Z" fill="url(#gs)" stroke="#eab643" stroke-width="1.3" stroke-linejoin="round"/></svg>
<svg style="left:534px;top:461px" width="15" height="14" viewBox="0 0 24 23"><path d="M12.0 1.3 L15.4 8.0 L22.7 9.1 L17.4 14.4 L18.6 21.7 L12.0 18.3 L5.4 21.7 L6.6 14.4 L1.3 9.1 L8.6 8.0 Z" fill="url(#gs)" stroke="#eab643" stroke-width="1.3" stroke-linejoin="round"/></svg>
<div class="cell" style="left:568px;top:461px;width:124px;font-size:14.5px;text-align:right">224</div>
<div class="cell" style="left:701px;top:461px;width:126px;font-size:14.5px;text-align:right">23</div>
<div class="cell" style="left:836px;top:461px;width:87px;font-size:14.5px;text-align:right">201</div>
<div class="pill" style="left:944px;top:459px;background:#ddf4d9">AOP</div>
<div class="a nw" style="left:1021px;top:453px;width:199px;height:31px;overflow:hidden;padding-left:10px"><div class="pill" style="position:relative;display:inline-block;left:auto;top:6px;margin-right:8px;background:#fde2e4">琼瑶浆</div></div>
<div class="pill" style="left:1231px;top:459px;background:#def3fc">干白</div>
<div class="pill" style="left:1329px;top:459px;background:#e4e1fc;letter-spacing:0.8px;padding:0 9px 0 10px">750ml</div>
<div class="pill" style="left:1431px;top:459px;background:#fde2e4">阿尔萨斯</div>
<div class="pill" style="left:1560px;top:459px;background:#e4e1fc">法国</div>
<svg style="left:16px;top:496px" width="6" height="9" viewBox="0 0 6 9"><g fill="#c5c8cc"><circle cx="1" cy="1" r="0.9"/><circle cx="5" cy="1" r="0.9"/><circle cx="1" cy="4.5" r="0.9"/><circle cx="5" cy="4.5" r="0.9"/><circle cx="1" cy="8" r="0.9"/><circle cx="5" cy="8" r="0.9"/></g></svg>
<svg style="left:27px;top:494px" width="13" height="13" viewBox="0 0 13 13"><rect x="0.65" y="0.65" width="11.7" height="11.7" rx="2" fill="none" stroke="#909296" stroke-width="1.3"/></svg>
<svg style="left:47px;top:495px" width="11" height="11" viewBox="0 0 11 11"><g fill="#c5c8cc"><path d="M6.5 0 L11 0 L11 4.5 Z"/><path d="M0 6.5 L0 11 L4.5 11 Z"/></g><g stroke="#c5c8cc" stroke-width="1.4"><line x1="8.5" y1="2.5" x2="6.2" y2="4.8"/><line x1="2.5" y1="8.5" x2="4.8" y2="6.2"/></g></svg>
<div class="cell" style="left:74px;top:494px">巴罗洛干红葡萄酒</div>
<div class="pill" style="left:306px;top:491px;background:#e6dedb">捞伺服</div>
<svg style="left:454px;top:493px" width="15" height="14" viewBox="0 0 24 23"><path d="M12.0 1.3 L15.4 8.0 L22.7 9.1 L17.4 14.4 L18.6 21.7 L12.0 18.3 L5.4 21.7 L6.6 14.4 L1.3 9.1 L8.6 8.0 Z" fill="url(#gs)" stroke="#eab643" stroke-width="1.3" stroke-linejoin="round"/></svg>
<svg style="left:474px;top:493px" width="15" height="14" viewBox="0 0 24 23"><path d="M12.0 1.3 L15.4 8.0 L22.7 9.1 L17.4 14.4 L18.6 21.7 L12.0 18.3 L5.4 21.7 L6.6 14.4 L1.3 9.1 L8.6 8.0 Z" fill="url(#gs)" stroke="#eab643" stroke-width="1.3" stroke-linejoin="round"/></svg>
<svg style="left:494px;top:493px" width="15" height="14" viewBox="0 0 24 23"><path d="M12.0 1.3 L15.4 8.0 L22.7 9.1 L17.4 14.4 L18.6 21.7 L12.0 18.3 L5.4 21.7 L6.6 14.4 L1.3 9.1 L8.6 8.0 Z" fill="url(#gs)" stroke="#eab643" stroke-width="1.3" stroke-linejoin="round"/></svg>
<svg style="left:514px;top:493px" width="15" height="14" viewBox="0 0 24 23"><path d="M12.0 1.3 L15.4 8.0 L22.7 9.1 L17.4 14.4 L18.6 21.7 L12.0 18.3 L5.4 21.7 L6.6 14.4 L1.3 9.1 L8.6 8.0 Z" fill="url(#gs)" stroke="#eab643" stroke-width="1.3" stroke-linejoin="round"/></svg>
<svg style="left:534px;top:493px" width="15" height="14" viewBox="0 0 24 23"><path d="M12.0 1.3 L15.4 8.0 L22.7 9.1 L17.4 14.4 L18.6 21.7 L12.0 18.3 L5.4 21.7 L6.6 14.4 L1.3 9.1 L8.6 8.0 Z" fill="url(#gs)" stroke="#eab643" stroke-width="1.3" stroke-linejoin="round"/></svg>
<div class="cell" style="left:568px;top:493px;width:124px;font-size:14.5px;text-align:right">333</div>
<div class="cell" style="left:701px;top:493px;width:126px;font-size:14.5px;text-align:right">42</div>
<div class="cell" style="left:836px;top:493px;width:87px;font-size:14.5px;text-align:right">291</div>
<div class="pill" style="left:944px;top:491px;background:#def3fc">DOCG</div>
<div class="a nw" style="left:1021px;top:485px;width:199px;height:31px;overflow:hidden;padding-left:10px"><div class="pill" style="position:relative;display:inline-block;left:auto;top:6px;margin-right:8px;background:#e6dedb">内比奥洛</div></div>
<div class="pill" style="left:1231px;top:491px;background:#e4e1fc">干红</div>
<div class="pill" style="left:1329px;top:491px;background:#e4e1fc;letter-spacing:0.8px;padding:0 9px 0 10px">750ml</div>
<div class="pill" style="left:1431px;top:491px;background:#fde2e4">皮埃蒙特</div>
<div class="pill" style="left:1560px;top:491px;background:#def3fc">意大利</div>
<svg style="left:30px;top:528px" width="11" height="11" viewBox="0 0 11 11"><g stroke="#909296" stroke-width="1.6"><line x1="0" y1="5.2" x2="10.5" y2="5.2"/><line x1="5.25" y1="0" x2="5.25" y2="10.5"/></g></svg>
</div></body></html>
